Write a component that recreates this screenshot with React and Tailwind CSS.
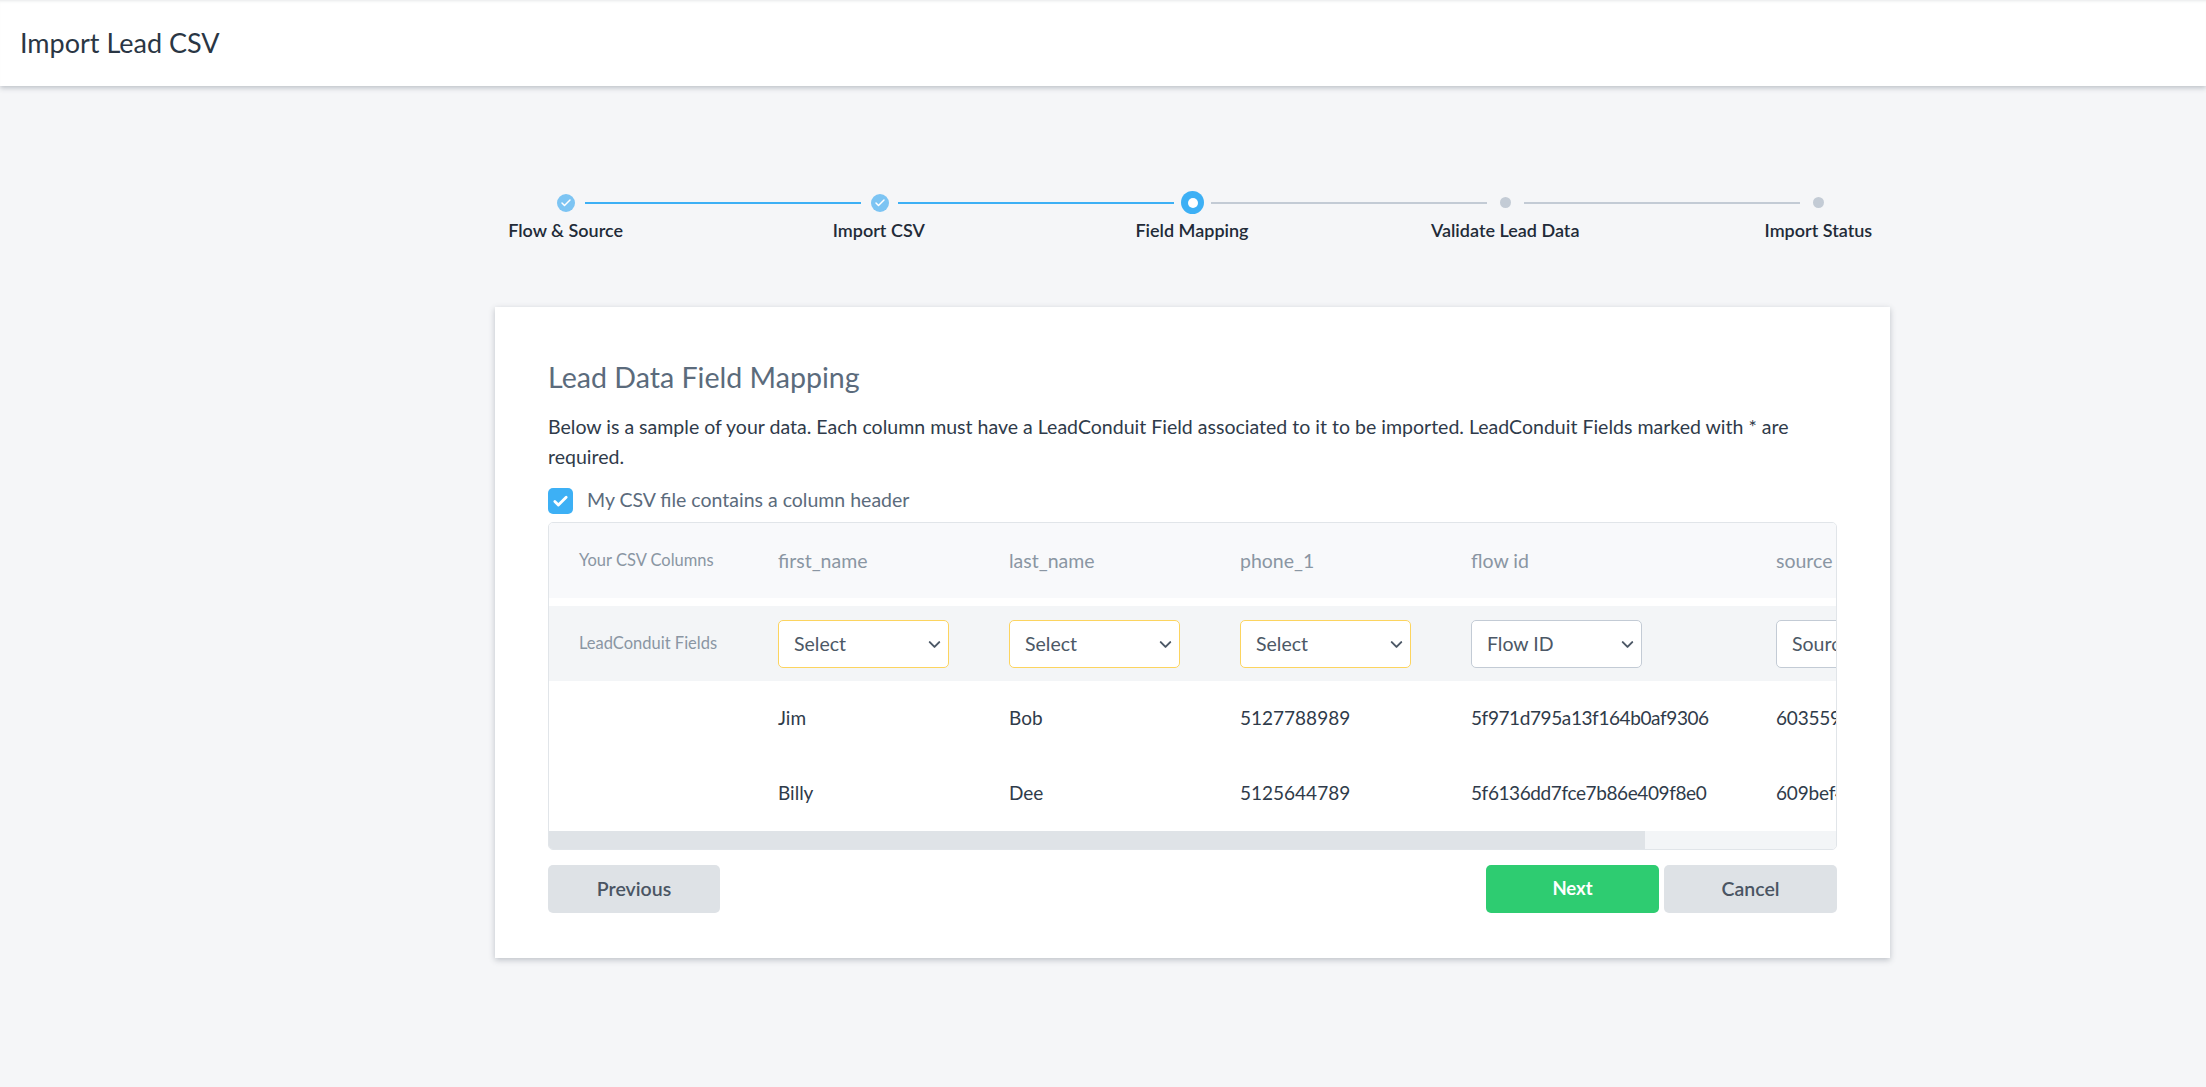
import { Check, ChevronDown } from "lucide-react";

const font = "font-['Lato','Liberation_Sans',sans-serif]";

function DoneDot({ className = "" }) {
  return (
    <span className={`flex h-[18px] w-[18px] shrink-0 items-center justify-center rounded-full bg-[#7cc4f3] ${className}`}>
      <Check size={12} strokeWidth={3} className="text-white" />
    </span>
  );
}

function Stepper() {
  const labels = ["Flow & Source", "Import CSV", "Field Mapping", "Validate Lead Data", "Import Status"];
  return (
    <div className="ml-[409px] w-[1566px]">
      <div className="ml-[148px] flex h-[23px] items-center">
        <DoneDot />
        <span className="ml-[10px] h-[2px] w-[276px] bg-[#3db0f5]" />
        <DoneDot className="ml-[10px]" />
        <span className="ml-[9px] h-[2px] w-[276px] bg-[#3db0f5]" />
        <span className="ml-[7px] flex h-[23px] w-[23px] shrink-0 items-center justify-center rounded-full bg-[#3db0f5]">
          <span className="h-[10px] w-[10px] rounded-full bg-white" />
        </span>
        <span className="ml-[7px] h-[2px] w-[276px] bg-[#c3cbd5]" />
        <span className="ml-[13px] h-[11px] w-[11px] shrink-0 rounded-full bg-[#c3cbd5]" />
        <span className="ml-[13px] h-[2px] w-[276px] bg-[#c3cbd5]" />
        <span className="ml-[13px] h-[11px] w-[11px] shrink-0 rounded-full bg-[#c3cbd5]" />
      </div>
      <div className="mt-[6px] grid grid-cols-5">
        {labels.map((label) => (
          <div key={label} className="text-center text-[18px] leading-[20px] font-semibold text-[#222b38]">
            {label}
          </div>
        ))}
      </div>
    </div>
  );
}

function FieldSelect({ value, warn }) {
  return (
    <div className="relative w-[171px] shrink-0">
      <select
        defaultValue={value}
        className={`h-[48px] w-[171px] appearance-none rounded-[5px] border bg-white pl-[15px] text-[19.5px] text-[#4c5866] outline-none ${warn ? "border-[#fcd45f]" : "border-[#c3cbd5]"}`}
      >
        <option>{value}</option>
      </select>
      <ChevronDown size={19} strokeWidth={2.5} className="pointer-events-none absolute top-[15px] right-[5px] text-[#4c5866]" />
    </div>
  );
}

const columns = [
  { name: "first_name", width: "w-[231px]", field: "Select", warn: true, rows: ["Jim", "Billy"], cell: "" },
  { name: "last_name", width: "w-[231px]", field: "Select", warn: true, rows: ["Bob", "Dee"], cell: "" },
  { name: "phone_1", width: "w-[231px]", field: "Select", warn: true, rows: ["5127788989", "5125644789"], cell: "" },
  { name: "flow id", width: "w-[305px]", field: "Flow ID", warn: false, rows: ["5f971d795a13f164b0af9306", "5f6136dd7fce7b86e409f8e0"], cell: "tracking-[-0.4px]" },
  { name: "source", width: "w-[305px]", field: "Source", warn: false, rows: ["60355928ab41c7e0a1f2d930", "609bef41d2a07c5b9e3f1a62"], cell: "tracking-[-0.2px]" },
];

function MappingTable() {
  return (
    <div className="mt-[8px] overflow-hidden rounded-[5px] border border-[#e1e5e9]">
      <div className="overflow-hidden">
        <div className="w-[1400px]">
          <div className="flex h-[75px] items-center bg-[#f8f9fb]">
            <div className="w-[229px] shrink-0 pl-[30px] text-[16.5px] text-[#8a96a3]">Your CSV Columns</div>
            {columns.map((c) => (
              <div key={c.name} className={`${c.width} shrink-0 text-[19.5px] text-[#8a96a3]`}>
                {c.name}
              </div>
            ))}
          </div>
          <div className="mt-[8px] flex h-[75px] items-center bg-[#f3f5f7]">
            <div className="w-[229px] shrink-0 pl-[30px] text-[16.5px] text-[#8a96a3]">LeadConduit Fields</div>
            {columns.map((c) => (
              <div key={c.name} className={`${c.width} shrink-0`}>
                <FieldSelect value={c.field} warn={c.warn} />
              </div>
            ))}
          </div>
          {[0, 1].map((row) => (
            <div key={row} className="flex h-[75px] items-center">
              <div className="w-[229px] shrink-0" />
              {columns.map((c) => (
                <div key={c.name} className={`${c.width} ${c.cell} shrink-0 text-[19px] text-[#2f3b4a]`}>
                  {c.rows[row]}
                </div>
              ))}
            </div>
          ))}
        </div>
      </div>
      <div className="h-[18px] bg-[#f3f5f7]">
        <div className="h-full w-[1096px] bg-[#dfe3e7]" />
      </div>
    </div>
  );
}

export default function App() {
  return (
    <div className={`${font} min-h-[1087px] bg-[#f5f6f8]`}>
      <header className="flex h-[86px] items-center bg-white pl-[20px] shadow-[0_2px_5px_rgba(60,70,85,0.3),inset_0_3px_3px_-2px_rgba(60,70,85,0.12)]">
        <h1 className="text-[27px] text-[#2a3644]">Import Lead CSV</h1>
      </header>

      <div className="pt-[105px]">
        <Stepper />
      </div>

      <div className="mt-[67px] ml-[495px] h-[651px] w-[1395px] bg-white px-[53px] pt-[46px] shadow-[0_2px_6px_rgba(60,70,85,0.3)]">
        <h2 className="text-[28.6px] leading-[48px] text-[#5b6b7c]">Lead Data Field Mapping</h2>
        <p className="mt-[11px] text-[19.55px] leading-[30px] text-[#2f3b4a]">
          Below is a sample of your data. Each column must have a LeadConduit Field associated to it to be imported. LeadConduit Fields marked with * are required.
        </p>
        <label className="mt-[16px] flex items-center">
          <span className="flex h-[26px] w-[25px] items-center justify-center rounded-[5px] bg-[#3db0f5]">
            <Check size={17} strokeWidth={4} className="text-white" />
          </span>
          <span className="ml-[14px] pb-[2px] text-[19.5px] leading-[24px] text-[#5b6b7c]">My CSV file contains a column header</span>
        </label>
        <MappingTable />
        <div className="mt-[15px] flex">
          <button className="h-[48px] w-[172px] rounded-[5px] bg-[#dee2e6] text-[19.5px] font-semibold text-[#4a5563]">Previous</button>
          <button className="ml-auto h-[48px] w-[173px] rounded-[5px] bg-[#2ecc71] text-[18.5px] font-bold text-white">Next</button>
          <button className="ml-[5px] h-[48px] w-[173px] rounded-[5px] bg-[#dee2e6] text-[19.5px] font-semibold text-[#4a5563]">Cancel</button>
        </div>
      </div>
    </div>
  );
}
